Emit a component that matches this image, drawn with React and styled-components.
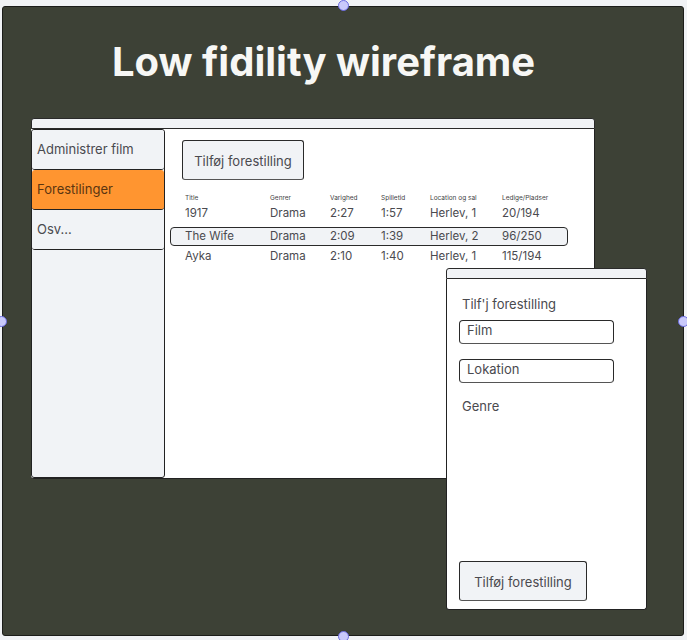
import React from 'react';
import styled, { createGlobalStyle } from 'styled-components';

const GlobalStyle = createGlobalStyle`
  html, body {
    margin: 0;
    padding: 0;
    background: #f1f3f6;
    font-family: Inter, "Liberation Sans", sans-serif;
  }
`;

const Page = styled.div`
  width: 687px;
  height: 640px;
  padding: 6px 3px 4px 2px;
  box-sizing: border-box;
  overflow: hidden;
`;

const Frame = styled.div`
  position: relative;
  height: 100%;
  box-sizing: border-box;
  padding: 0 0 0 28px;
  background: #3d4136;
  border: 1px solid #1c1d1a;
  border-radius: 3px;
`;

const Handle = styled.span`
  position: absolute;
  width: 11px;
  height: 11px;
  box-sizing: border-box;
  border-radius: 50%;
  background: #c9c9fb;
  border: 1px solid #6a6ae0;
  left: ${props => props.$left};
  top: ${props => props.$top};
`;

const Title = styled.h1`
  margin: 0;
  padding: 32px 0 0 81px;
  height: 111px;
  box-sizing: border-box;
  font-size: 40px;
  line-height: 46px;
  font-weight: 700;
  color: #f7f7f5;
  white-space: nowrap;
`;

const TitleBar = styled.div`
  height: 11px;
  box-sizing: border-box;
  background: #f1f3f6;
  border: 1px solid #2a2a2a;
  border-radius: 3px 3px 0 0;
`;

const Window = styled.div`
  width: 564px;
`;

const WindowBody = styled.div`
  display: flex;
  height: 350px;
  background: #fff;
  border-radius: 0 0 3px 3px;
  border-bottom: 1px solid #222;
  border-right: 1px solid #222;
  box-sizing: border-box;
`;

const Sidebar = styled.nav`
  width: 134px;
  flex-shrink: 0;
  box-sizing: border-box;
  background: #f1f3f6;
  border: 1px solid #222;
  border-radius: 3px;
  display: flex;
  flex-direction: column;
`;

const NavItem = styled.div`
  height: 40px;
  box-sizing: border-box;
  padding: 0 0 1px 5px;
  display: flex;
  align-items: center;
  font-size: 13px;
  color: ${props => (props.$active ? '#5b3510' : '#4a4a4f')};
  background: ${props => (props.$active ? '#ff9530' : '#f1f3f6')};
  border-bottom: 1px solid #222;
  border-radius: 3px;
`;

const Content = styled.main`
  flex: 1;
  padding: 11px 0 0 6px;
  min-width: 0;
`;

const Button = styled.button`
  display: block;
  font: inherit;
  font-size: 13px;
  color: #4a4a4f;
  background: #f1f3f6;
  border: 1px solid #2a2a2a;
  border-bottom-color: #555;
  border-radius: 3px;
  padding: 1px 0 0;
  width: ${props => props.$width};
  height: 40px;
  margin-left: ${props => props.$indent || 0};
`;

const Table = styled.div`
  margin: 13px 0 0 -1px;
  width: 398px;
`;

const Row = styled.div`
  display: grid;
  grid-template-columns: 85px 60px 51px 49px 72px 1fr;
  align-items: center;
  height: ${props => props.$height};
  box-sizing: border-box;
  padding-left: 15px;
  padding-bottom: ${props => (props.$head ? 0 : '5px')};
  font-size: ${props => (props.$head ? '6.5px' : '11.5px')};
  color: ${props => (props.$head ? '#3f3f44' : '#4a4a4f')};
  white-space: nowrap;
  ${props => props.$selected && `
    background: #f1f3f6;
    border: 1px solid #2a2a2a;
    border-radius: 4px;
    padding-left: 14px;
    padding-bottom: 1px;
  `}
`;

const Popup = styled.section`
  position: absolute;
  left: 443px;
  top: 261px;
  width: 201px;
`;

const PopupBody = styled.div`
  height: 331px;
  box-sizing: border-box;
  background: #fff;
  border: 1px solid #222;
  border-top: 0;
  border-radius: 0 0 3px 3px;
  padding: 17px 0 0 12px;
  display: flex;
  flex-direction: column;
`;

const PopupLabel = styled.div`
  font-size: 13px;
  line-height: 16px;
  color: #4a4a4f;
  padding-left: 3px;
  margin-top: ${props => props.$top || 0};
`;

const Field = styled.div`
  width: 155px;
  height: 24px;
  box-sizing: border-box;
  margin-top: ${props => props.$top};
  border: 1px solid #2a2a2a;
  border-bottom-color: #555;
  border-radius: 4px;
  padding: 1px 0 0 7px;
  font-size: 13px;
  line-height: 16px;
  color: #4a4a4f;
`;

const PopupFooter = styled.div`
  margin-top: auto;
  padding-bottom: 8px;
`;

const columns = ['Title', 'Genrer', 'Varighed', 'Spilletid', 'Location og sal', 'Ledige/Pladser'];

const shows = [
  ['1917', 'Drama', '2:27', '1:57', 'Herlev, 1', '20/194'],
  ['The Wife', 'Drama', '2:09', '1:39', 'Herlev, 2', '96/250'],
  ['Ayka', 'Drama', '2:10', '1:40', 'Herlev, 1', '115/194'],
];

export default function App() {
  return (
    <Page>
      <GlobalStyle />
      <Frame>
        <Handle $left="335px" $top="-7px" />
        <Handle $left="-7px" $top="309px" />
        <Handle $left="675px" $top="309px" />
        <Handle $left="335px" $top="624px" />
        <Title>Low fidility wireframe</Title>
        <Window>
          <TitleBar />
          <WindowBody>
            <Sidebar>
              <NavItem>Administrer film</NavItem>
              <NavItem $active>Forestilinger</NavItem>
              <NavItem>Osv...</NavItem>
            </Sidebar>
            <Content>
              <Button $width="122px" $indent="11px">Tilføj forestilling</Button>
              <Table>
                <Row $head $height="10px">
                  {columns.map(c => <span key={c}>{c}</span>)}
                </Row>
                {shows.map((show, i) => (
                  <Row key={show[0]} $selected={i === 1} $height={i === 1 ? '19px' : '24px'}>
                    {show.map((cell, j) => <span key={j}>{cell}</span>)}
                  </Row>
                ))}
              </Table>
            </Content>
          </WindowBody>
        </Window>
        <Popup>
          <TitleBar />
          <PopupBody>
            <PopupLabel>Tilf'j forestilling</PopupLabel>
            <Field $top="8px">Film</Field>
            <Field $top="15px">Lokation</Field>
            <PopupLabel $top="15px">Genre</PopupLabel>
            <PopupFooter>
              <Button $width="128px">Tilføj forestilling</Button>
            </PopupFooter>
          </PopupBody>
        </Popup>
      </Frame>
    </Page>
  );
}
